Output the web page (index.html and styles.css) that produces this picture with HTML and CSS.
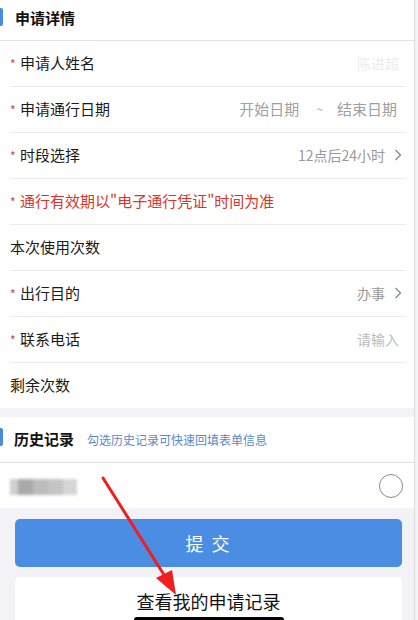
FILE: index.html
```html
<!DOCTYPE html>
<html lang="zh">
<head>
<meta charset="utf-8">
<link rel="stylesheet" href="styles.css">
</head>
<body>
<div class="page">
  <section class="card">
    <div class="sec-head"><span class="sec-title">申请详情</span></div>
    <div class="rows">
      <div class="row"><span class="label"><i class="star">*</i>申请人姓名</span><span class="value faint">陈进超</span></div>
      <div class="row"><span class="label"><i class="star">*</i>申请通行日期</span><span class="value dates"><span>开始日期</span><span class="tilde">~</span><span>结束日期</span></span></div>
      <div class="row"><span class="label"><i class="star">*</i>时段选择</span><span class="value">12点后24小时<svg class="chev" width="8" height="12" viewBox="0 0 8 12"><polyline points="1.5,1 6.5,6 1.5,11" fill="none" stroke="#888" stroke-width="1.3"/></svg></span></div>
      <div class="row"><span class="label red"><i class="star">*</i>通行有效期以"电子通行凭证"时间为准</span></div>
      <div class="row"><span class="label">本次使用次数</span></div>
      <div class="row"><span class="label"><i class="star">*</i>出行目的</span><span class="value">办事<svg class="chev" width="8" height="12" viewBox="0 0 8 12"><polyline points="1.5,1 6.5,6 1.5,11" fill="none" stroke="#888" stroke-width="1.3"/></svg></span></div>
      <div class="row"><span class="label"><i class="star">*</i>联系电话</span><span class="value placeholder">请输入</span></div>
      <div class="row"><span class="label">剩余次数</span></div>
    </div>
  </section>
  <section class="card history">
    <div class="sec-head"><span class="sec-title">历史记录</span><span class="sec-sub">勾选历史记录可快速回填表单信息</span></div>
    <div class="hist-row">
      <div class="blur-name"><span></span><span></span><span></span><span></span><span></span></div>
      <span class="radio"></span>
    </div>
  </section>
  <div class="actions">
    <button class="btn primary">提 交</button>
    <button class="btn plain">查看我的申请记录</button>
  </div>
  <svg class="arrow" width="418" height="620" viewBox="0 0 418 620">
    <line x1="103" y1="478" x2="166" y2="578" stroke="#f01e1e" stroke-width="3" stroke-linecap="round"/>
    <polygon points="176,595 156,578 172,570" fill="#f01e1e"/>
  </svg>
  <div class="homebar"></div>
</div>
</body>
</html>
```

FILE: styles.css
```css
* { box-sizing: border-box; }
html, body {
  margin: 0;
  padding: 0;
}
body {
  width: 418px;
  height: 620px;
  overflow: hidden;
  background: #f3f3f7;
  font-family: "Noto Sans CJK SC", "Noto Sans", sans-serif;
  color: #333;
}
.page {
  position: relative;
  width: 415px;
  height: 620px;
  border-right: 1px solid #dcdcdc;
  background: #f3f3f7;
}
.card {
  background: #fff;
}
.sec-head {
  position: relative;
  height: 41px;
  display: flex;
  align-items: center;
  padding-left: 15px;
  border-bottom: 1px solid #e2e2e2;
}
.sec-head::before {
  content: "";
  position: absolute;
  left: 0;
  top: 8px;
  width: 3px;
  height: 18px;
  background: #4a8be0;
  border-radius: 0 2px 2px 0;
}
.sec-title {
  font-size: 15px;
  font-weight: 700;
  color: #111;
  position: relative;
  top: -3px;
}
.rows {
  padding: 0 8px 0 10px;
}
.row {
  height: 46px;
  display: flex;
  align-items: center;
  justify-content: space-between;
  border-bottom: 1px solid #ececec;
  padding-right: 7px;
  padding-bottom: 2px;
}
.row:last-child {
  border-bottom: none;
  height: 45px;
}
.label {
  font-size: 15px;
  color: #1a1a1a;
  display: flex;
  align-items: center;
}
.star {
  font-style: normal;
  color: #d84040;
  font-size: 12px;
  width: 10px;
  position: relative;
  top: 1px;
}
.red { color: #d9352b; }
.value {
  font-size: 14px;
  color: #999;
  display: flex;
  align-items: center;
}
.chev { margin-left: 9px; margin-right: -3px; }
.dates { font-size: 15px; color: #a0a0a0; margin-right: 2px; }
.dates .tilde { margin: 0 14px 0 17px; font-size: 12px; color: #aaa; }
.faint {
  color: #ececec;
  filter: blur(0.5px);
  font-size: 14px;
}
.placeholder { color: #bbb; }
.history {
  margin-top: 9px;
}
.history .sec-head {
  height: 46px;
}
.history .sec-head::before {
  top: 11px;
}
.history .sec-title {
  top: -1px;
  margin-left: -1px;
}
.sec-sub {
  font-size: 12px;
  color: #5b88c7;
  margin-left: 13px;
}
.hist-row {
  height: 45px;
  display: flex;
  align-items: center;
  justify-content: space-between;
  padding: 0 11px 0 10px;
}
.blur-name {
  display: flex;
  filter: blur(1.5px);
  height: 16px;
  margin-top: 2px;
}
.blur-name span {
  width: 15px;
  height: 16px;
  background: #b3b3b3;
}
.blur-name span:nth-child(1) { background: #cfcfcf; width: 8px; }
.blur-name span:nth-child(2) { background: #a9a9a9; }
.blur-name span:nth-child(3) { background: #bcbcbc; }
.blur-name span:nth-child(4) { background: #c4c4c4; }
.blur-name span:nth-child(5) { background: #d6d6d6; width: 14px; }
.radio {
  width: 24px;
  height: 24px;
  border: 1px solid #888;
  border-radius: 50%;
}
.actions {
  display: flex;
  flex-direction: column;
  gap: 10px;
  padding: 11px 13px 0 15px;
}
.btn {
  width: 387px;
  font-family: "Noto Sans CJK SC", "Noto Sans", sans-serif;
  border: none;
  border-radius: 5px;
  cursor: pointer;
}
.primary {
  height: 48px;
  background: #4a8de2;
  color: #fff;
  font-size: 18px;
  letter-spacing: 2px;
}
.plain {
  height: 60px;
  background: #fff;
  color: #111;
  font-size: 18px;
  padding-bottom: 13px;
}
.arrow {
  position: absolute;
  left: 0;
  top: 0;
  pointer-events: none;
}
.homebar {
  position: absolute;
  left: 134px;
  top: 617px;
  width: 150px;
  height: 6px;
  border-radius: 3px;
  background: #000;
}
```
